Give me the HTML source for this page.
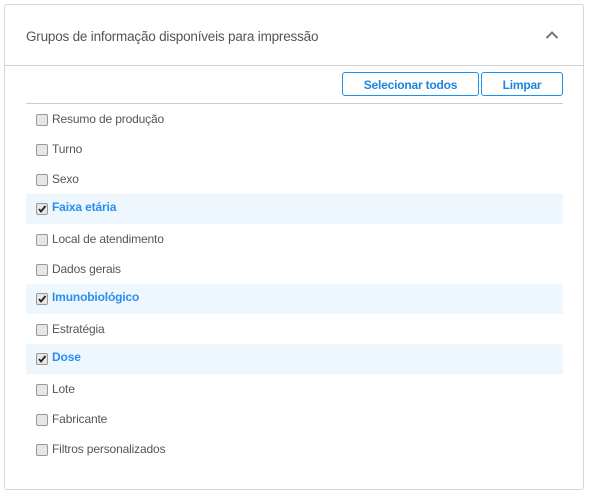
<!DOCTYPE html>
<html><head><style>
body{margin:0;width:589px;height:493px;background:#fff;font-family:"Liberation Sans",sans-serif;position:relative;overflow:hidden}
.panel{position:absolute;left:4px;top:4px;width:578px;height:484px;border:1px solid #d6d6d6;border-radius:3px}
.hdr{position:absolute;left:0;top:0;width:578px;height:60px;border-bottom:1px solid #d0d0d0}
.title{position:absolute;left:21px;top:24px;font-size:13.5px;letter-spacing:-0.2px;color:#555}
.chev{position:absolute;left:540px;top:25px}
.btn{position:absolute;top:67px;height:24px;border:1px solid #1e90ee;border-radius:3px;color:#1a86e0;font-size:12px;font-weight:bold;letter-spacing:-0.2px;text-align:center;line-height:24px;box-sizing:border-box}
.sep{position:absolute;left:21px;top:98px;width:537px;height:1px;background:#ccc}
.row{position:absolute;left:21px;width:537px;height:30px}
.row.on{background:#eff7fe}
.cb{position:absolute;left:10px;top:9px;width:10px;height:10px;border:1px solid #999;border-radius:2px;background:#e6e6e6}
.lbl{position:absolute;left:26px;top:7px;font-size:12px;letter-spacing:-0.15px;color:#555}
.on .lbl{color:#2a8ef0;font-weight:bold;top:6px}
</style></head><body>
<div class="panel">
<div class="hdr"><div class="title">Grupos de informação disponíveis para impressão</div>
<svg class="chev" width="14" height="10" viewBox="0 0 14 10"><path d="M1.5 8 L7 2.5 L12.5 8" fill="none" stroke="#777" stroke-width="2"/></svg></div>
<div class="btn" style="left:337px;width:137px">Selecionar todos</div>
<div class="btn" style="left:476px;width:82px">Limpar</div>
<div class="sep"></div>
<div class="row" style="top:100px"><div class="cb"></div><div class="lbl">Resumo de produção</div></div>
<div class="row" style="top:130px"><div class="cb"></div><div class="lbl">Turno</div></div>
<div class="row" style="top:160px"><div class="cb"></div><div class="lbl">Sexo</div></div>
<div class="row on" style="top:189px"><div class="cb"><svg width="10" height="10" style="position:absolute;left:0;top:0"><path d="M2 5 L4 7.5 L8.5 2" fill="none" stroke="#222" stroke-width="1.8"/></svg></div><div class="lbl">Faixa etária</div></div>
<div class="row" style="top:220px"><div class="cb"></div><div class="lbl">Local de atendimento</div></div>
<div class="row" style="top:250px"><div class="cb"></div><div class="lbl">Dados gerais</div></div>
<div class="row on" style="top:279px"><div class="cb"><svg width="10" height="10" style="position:absolute;left:0;top:0"><path d="M2 5 L4 7.5 L8.5 2" fill="none" stroke="#222" stroke-width="1.8"/></svg></div><div class="lbl">Imunobiológico</div></div>
<div class="row" style="top:310px"><div class="cb"></div><div class="lbl">Estratégia</div></div>
<div class="row on" style="top:339px"><div class="cb"><svg width="10" height="10" style="position:absolute;left:0;top:0"><path d="M2 5 L4 7.5 L8.5 2" fill="none" stroke="#222" stroke-width="1.8"/></svg></div><div class="lbl">Dose</div></div>
<div class="row" style="top:370px"><div class="cb"></div><div class="lbl">Lote</div></div>
<div class="row" style="top:400px"><div class="cb"></div><div class="lbl">Fabricante</div></div>
<div class="row" style="top:430px"><div class="cb"></div><div class="lbl">Filtros personalizados</div></div>
</div>
</body></html>
